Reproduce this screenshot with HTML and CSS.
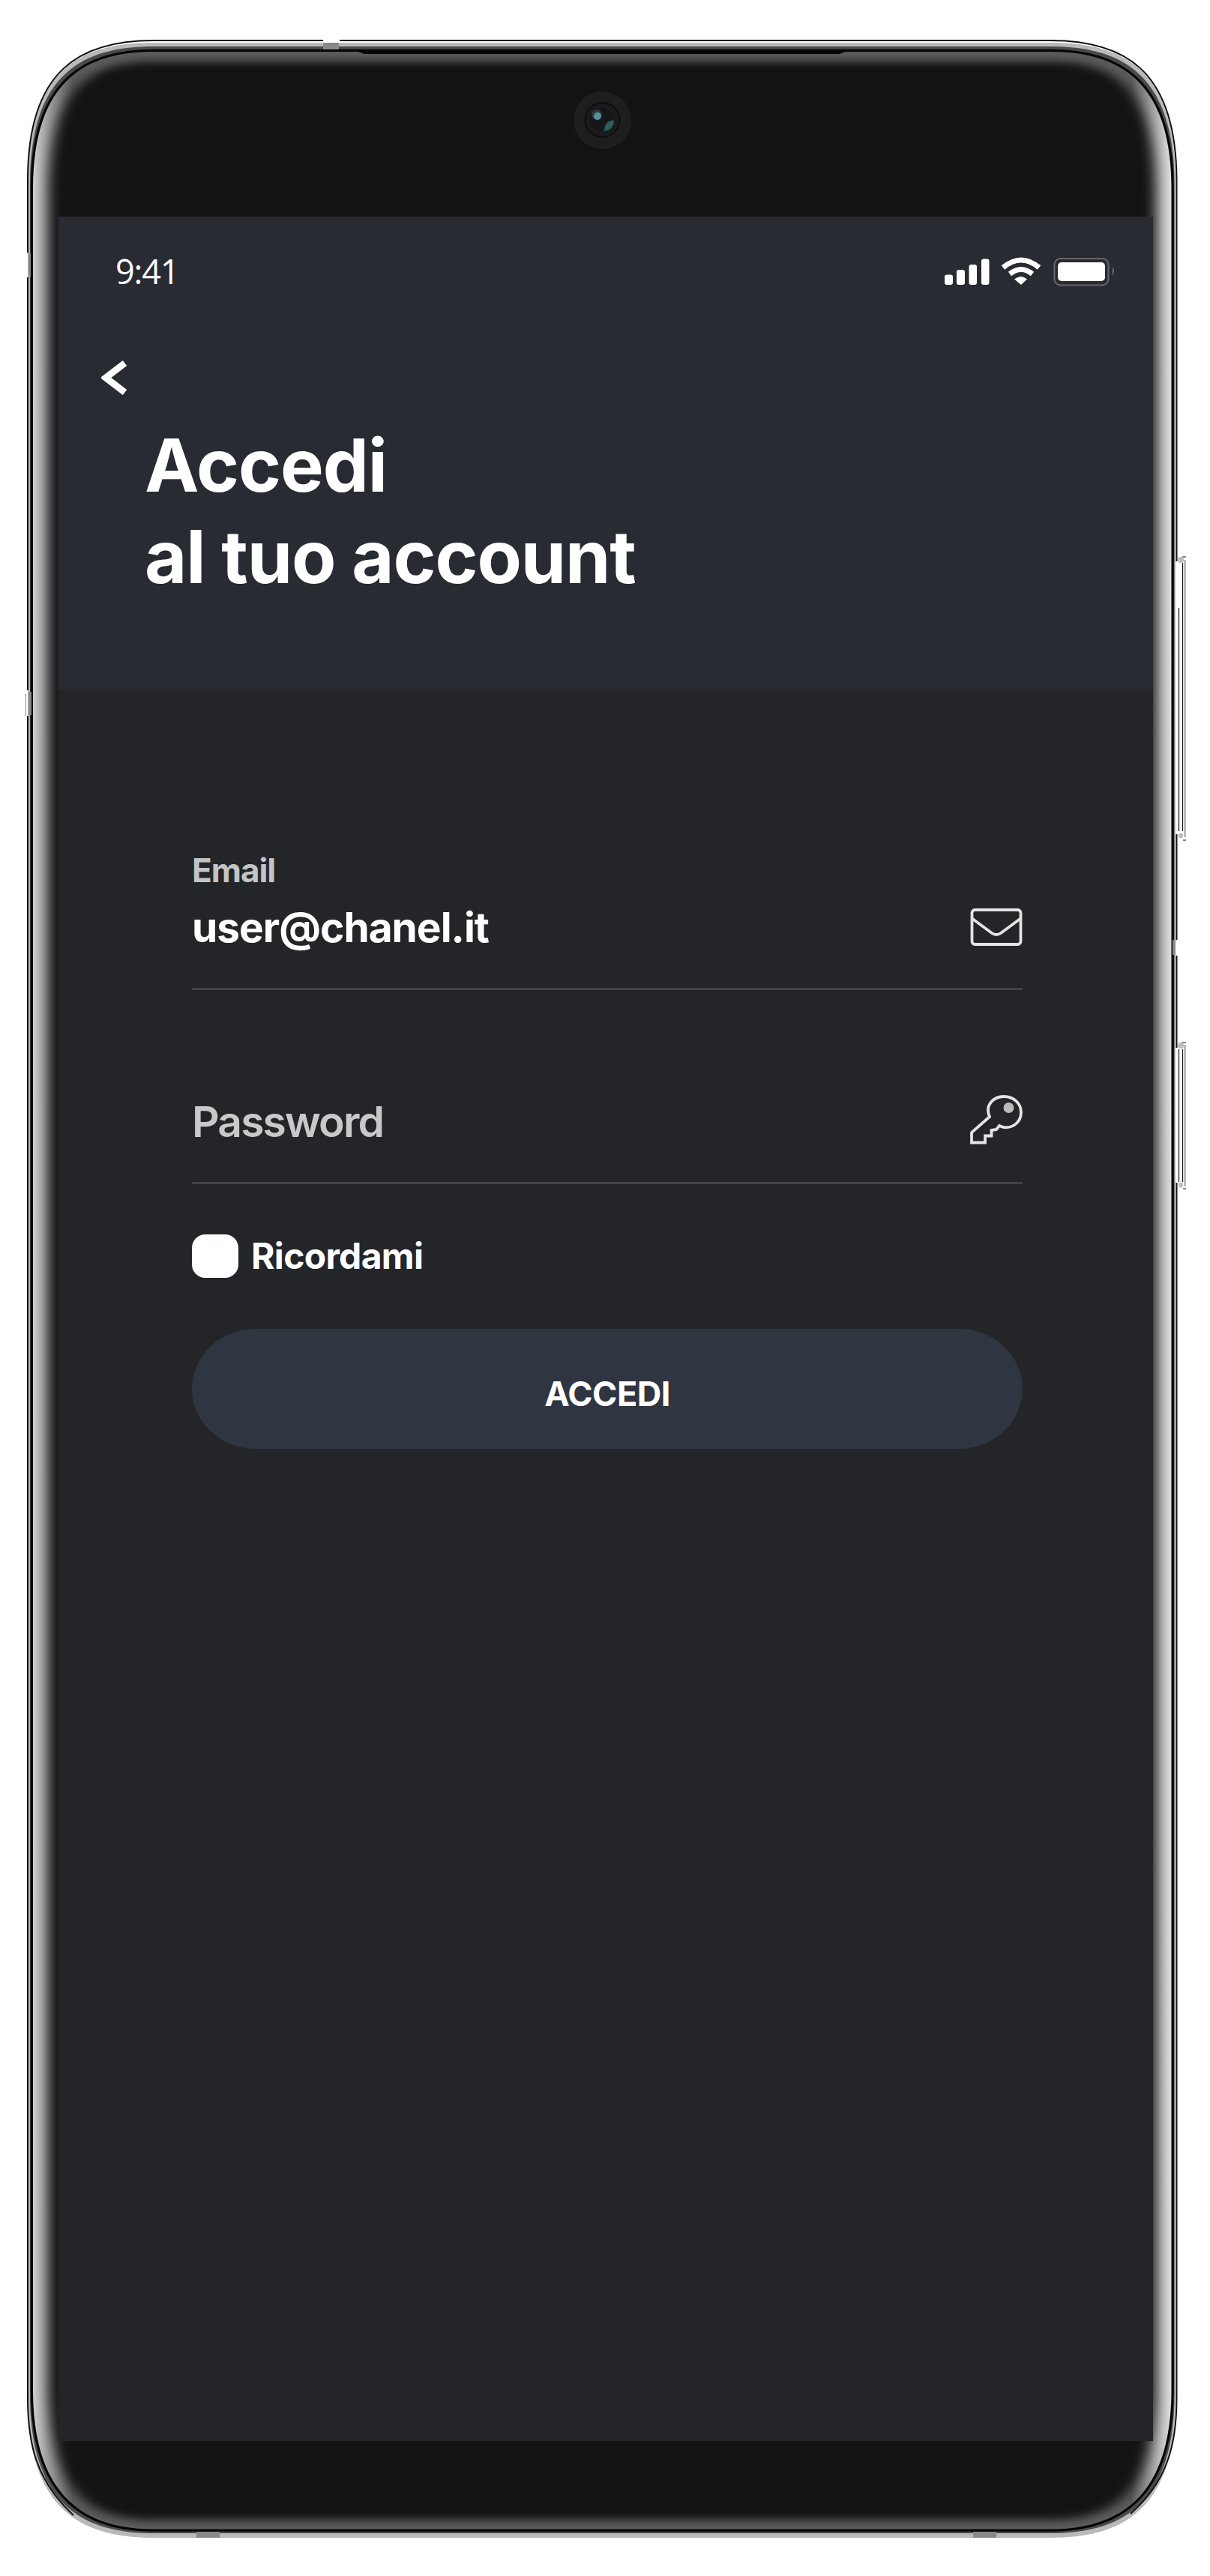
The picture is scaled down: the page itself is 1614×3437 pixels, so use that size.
FILE: index.html
```html
<!DOCTYPE html>
<html lang="it">
<head>
<meta charset="utf-8">
<title>Accedi</title>
<link rel="stylesheet" href="styles.css">
</head>
<body>
<div class="phone">
  <svg class="frame" width="1614" height="3437" viewBox="0 0 1614 3437" aria-hidden="true">
    <defs>
      <path id="body" d="M205 57H1401C1497 57 1568 91 1568 240V3200C1568 3349 1497 3386 1401 3386H205C109 3386 37 3349 37 3200V240C37 91 109 57 205 57Z"/>
      <path id="glass" d="M205 69H1401C1487 69 1562.500 103 1562.500 252V3188C1562.500 3337 1487 3374.500 1401 3374.500H205C119 3374.500 44 3337 44 3188V252C44 103 119 69 205 69Z"/>
      <linearGradient id="sides" gradientUnits="userSpaceOnUse" x1="44" y1="0" x2="1562" y2="0">
        <stop offset="0" stop-color="#d0d0d0"/><stop offset=".011" stop-color="#aaa"/><stop offset=".035" stop-color="#5c5c5c"/>
        <stop offset=".965" stop-color="#5c5c5c"/><stop offset=".989" stop-color="#b8b8b8"/><stop offset="1" stop-color="#dedede"/>
      </linearGradient>
      <filter id="soft" x="-5%" y="-5%" width="110%" height="110%" color-interpolation-filters="sRGB"><feGaussianBlur stdDeviation="9 6"/></filter>
      <clipPath id="inside"><use href="#glass"/></clipPath>
    </defs>
    <use href="#body" fill="#b9b9b9"/>
    <path d="M205 62H1401C1493 62 1566.500 96 1566.500 245V3195C1566.500 3344 1493 3380 1401 3380H205C113 3380 40 3344 40 3195V245C40 96 113 62 205 62Z" fill="#4a4a4a"/>
    <use href="#glass" fill="none" stroke="#050505" stroke-width="6.500"/>
    <use href="#glass" fill="url(#sides)"/>
    <g clip-path="url(#inside)">
      <path d="M205 82H1401C1486 82 1541 116 1541 262V3178C1541 3328 1486 3362 1401 3362H205C120 3362 65 3328 65 3178V262C65 116 120 82 205 82Z" fill="#131313" filter="url(#soft)"/>
    </g>
    <path d="M37 337V240C37 91 109 54 205 54H431M453 54H1401C1497 54 1569 91 1569.500 240V749M1569.500 1113V1254M1569.500 1275V1398M1569.500 1578V3200C1569.500 3260 1558 3310 1508 3354M37 370V921M37 955V3200C37 3260 48 3310 98 3356" fill="none" stroke="#111" stroke-width="2"/>
    <path d="M478 69L486 72H1120L1128 69Z" fill="#050505"/>
    <path d="M431 57h21v9h-21zM262 3378h31v8h-31zM1298 3378h31v8h-31zM1564 1254h4v20h-4zM38 337h3v32h-3zM38 923h4v31h-4zM34 926h1v29h-1z" fill="#888"/>
    <g fill="#bdbdbd">
      <path d="M1579 747h3v370h-3zM1579 1394h3v189h-3z"/>
      <ellipse cx="1575" cy="747" rx="4" ry="4"/><ellipse cx="1575" cy="1115" rx="3" ry="3.500"/>
      <ellipse cx="1575" cy="1395" rx="4" ry="4"/><ellipse cx="1575" cy="1581" rx="3" ry="3.500"/>
    </g>
    <path d="M1572.500 811V1109M1577.500 751V1109M1572.500 1400V1577M1577.500 1400V1577M1577 743h5M1578 1121h4M1577 1391h5M1578 1586h4" stroke="#111" stroke-width="1.200"/>
    <circle cx="803.500" cy="160.500" r="38.500" fill="#1e1e1e"/>
    <circle cx="803.500" cy="160" r="23" fill="#1d1a1b" stroke="#0e0e0e" stroke-width="2"/>
    <circle cx="802" cy="159" r="15" fill="#14171a"/>
    <circle cx="796" cy="153" r="7" fill="#30373a"/>
    <circle cx="797" cy="155" r="5" fill="#568f9e"/>
    <path d="M806 175C806 166 811 160 819 160.500C819 168 815 174 806 175Z" fill="#2c5e5c"/>
  </svg>

  <main class="screen">
    <header class="header">
      <div class="status">
        <span class="time">9:41</span>
        <svg class="status-icons" width="230" height="40" viewBox="1258 343 230 40" aria-hidden="true">
          <g fill="#fff">
            <rect x="1260" y="366.500" width="11" height="13.500" rx="3"/><rect x="1276" y="360" width="11" height="20" rx="3"/>
            <rect x="1292.500" y="353" width="10.500" height="27" rx="3"/><rect x="1309" y="345.500" width="10.500" height="34.500" rx="3"/>
            <path d="M1353 372.500Q1362 365.500 1370 372.500L1362 380Z"/>
            <rect x="1411" y="350" width="63" height="25" rx="5"/>
          </g>
          <g fill="none" stroke="#fff" stroke-width="7"><path d="M1338 357Q1362 337 1386 357"/><path d="M1347 365.500Q1362 353.500 1377 365.500"/></g>
          <rect x="1406.500" y="345" width="72" height="35.500" rx="8" fill="none" stroke="#66686e" stroke-width="2"/>
          <path d="M1484 356.500Q1488 362 1484 368Z" fill="#77797e"/>
        </svg>
      </div>
      <a class="back" href="#" aria-label="Indietro"><svg width="36" height="48" viewBox="0 0 36 48"><path d="M31.500 4.500L6 24L31.500 43.500" fill="none" stroke="#fff" stroke-width="9"/></svg></a>
      <h1 class="title">Accedi<br>al tuo account</h1>
    </header>
    <form class="form">
      <div class="field field-email">
        <div class="field-text"><span class="label">Email</span><span class="value">user@chanel.it</span></div>
        <svg class="icon mail" width="70" height="50" viewBox="0 0 70 50"><rect x="2.500" y="2" width="65" height="46" rx="4"/><path d="M2 13L29 33Q35 37 41 33L68 13"/></svg>
      </div>
      <div class="field field-password">
        <span class="placeholder">Password</span>
        <svg class="icon key" width="70" height="66" viewBox="0 0 70 66"><path d="M26 29C19 13 32 2 45 2C59 2 68 12 68 23C68 38 53 48 39 41L35 46L28.500 47V54.500H20V63.500H2V50Z"/><circle class="key-hole" cx="51.500" cy="17" r="7"/></svg>
      </div>
      <label class="remember"><span class="box"></span><span class="remember-text">Ricordami</span></label>
      <button class="submit" type="button"><span>ACCEDI</span></button>
    </form>
  </main>
</div>
</body>
</html>
```

FILE: styles.css
```css
* { box-sizing: border-box; }
body { margin: 0; background: #fff; font-family: Inter, "Liberation Sans", sans-serif; color: #fff; }
.phone { position: relative; width: 1614px; height: 3437px; padding: 289px 76px 180px 78px; overflow: hidden; }
.frame { position: absolute; left: 0; top: 0; }
.screen { position: relative; width: 1460px; height: 2968px; background: #242529; }
.header { height: 631px; background: #292b33; padding-top: 54px; }
.status { display: flex; justify-content: space-between; height: 40px; padding: 0 50px 0 76px; }
.time { font: 500 45px/38px "Open Sans", "Noto Sans", sans-serif; letter-spacing: -1.2px; }
.back { display: block; width: 36px; height: 48px; margin: 97px 0 0 57px; }
.back svg, .icon, .status-icons { display: block; flex: none; }
.title { margin: 32px 0 0 115px; font-size: 97px; line-height: 122px; font-weight: 700; letter-spacing: -1.1px; white-space: nowrap; }
.form { padding: 219px 174px 0 178px; }
.field { display: flex; justify-content: space-between; border-bottom: 3px solid #444345; }
.field-email { height: 182px; }
.field-text { display: flex; flex-direction: column; }
.label { font-size: 44px; line-height: 45px; font-weight: 700; color: #c4c4c5; letter-spacing: -1px; }
.value { margin-top: 23px; font-size: 55px; line-height: 60px; font-weight: 700; letter-spacing: -1px; }
.icon { fill: none; stroke: #e4e4e5; stroke-width: 3.8px; }
.mail { margin-top: 73px; }
.key-hole { fill: #bbb; stroke: none; }
.field-password { height: 259px; padding-top: 140px; }
.placeholder { font-size: 57px; line-height: 71px; font-weight: 600; color: #c9c9ca; letter-spacing: -1.9px; }
.remember { display: flex; align-items: center; height: 58px; margin-top: 67px; }
.box { width: 62px; height: 58px; border-radius: 18px; background: #fff; }
.remember-text { margin-left: 17px; font-size: 48px; line-height: 58px; font-weight: 700; letter-spacing: -0.7px; }
.submit { display: flex; align-items: center; justify-content: center; width: 1108px; height: 160px; margin: 68px 0 0; padding: 13px 0 0; border: 0; border-radius: 85px / 80px; background: #2f3541; color: #fff; font: 700 45px/60px Inter, sans-serif; letter-spacing: -0.5px; }
```
